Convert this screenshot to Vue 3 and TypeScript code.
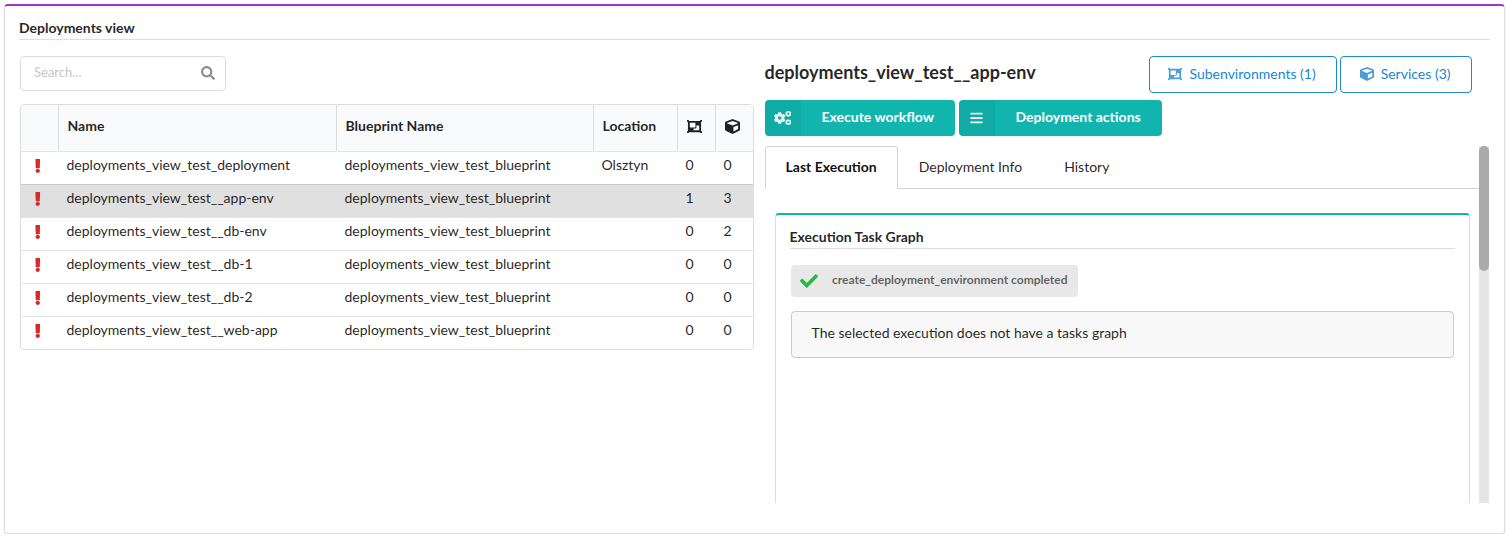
<script setup lang="ts">
interface Glyph {
  box: string
  d: string
}

interface Deployment {
  name: string
  blueprint: string
  location: string
  environments: number
  services: number
}

const icons: Record<string, Glyph> = {
  error: {
    box: '0 0 192 512',
    d: 'M176 432c0 44.112-35.888 80-80 80s-80-35.888-80-80 35.888-80 80-80 80 35.888 80 80zM10 16l12 312C22.5 336 30 342 40 342h112c10 0 17.5-6 18-14l12-312C182.5 7 175 0 166 0H26C17 0 9.500 7 10 16z',
  },
  search: {
    box: '0 0 512 512',
    d: 'M505 442.7L405.3 343c-4.5-4.5-10.6-7-17-7H372c27.6-35.3 44-79.7 44-128C416 93.1 322.9 0 208 0S0 93.1 0 208s93.1 208 208 208c48.3 0 92.7-16.4 128-44v16.3c0 6.4 2.5 12.5 7 17l99.7 99.7c9.4 9.4 24.6 9.4 33.9 0l28.3-28.3c9.4-9.4 9.4-24.6.1-34zM208 336c-70.7 0-128-57.2-128-128 0-70.7 57.2-128 128-128 70.7 0 128 57.2 128 128 0 70.7-57.2 128-128 128z',
  },
  bars: {
    box: '0 0 448 512',
    d: 'M16 132h416c8.8 0 16-7.2 16-16V76c0-8.8-7.2-16-16-16H16C7.2 60 0 67.2 0 76v40c0 8.8 7.2 16 16 16zm0 160h416c8.8 0 16-7.2 16-16v-40c0-8.8-7.2-16-16-16H16c-8.8 0-16 7.2-16 16v40c0 8.8 7.2 16 16 16zm0 160h416c8.8 0 16-7.2 16-16v-40c0-8.8-7.2-16-16-16H16c-8.8 0-16 7.2-16 16v40c0 8.8 7.2 16 16 16z',
  },
  check: {
    box: '0 0 512 512',
    d: 'M173.898 439.404l-166.4-166.4c-9.997-9.997-9.997-26.206 0-36.204l36.203-36.204c9.997-9.998 26.207-9.998 36.204 0L192 312.69 432.095 72.596c9.997-9.997 26.207-9.997 36.204 0l36.203 36.204c9.997 9.997 9.997 26.206 0 36.204l-294.4 294.401c-9.998 9.997-26.207 9.997-36.204-.001z',
  },
  cube: {
    box: '0 0 512 512',
    d: 'M239.1 6.3l-208 78c-18.7 7-31.1 25-31.1 45v225.1c0 18.2 10.3 34.8 26.5 42.9l208 104c13.5 6.8 29.4 6.8 42.9 0l208-104c16.3-8.1 26.5-24.8 26.5-42.9V129.3c0-20-12.4-37.9-31.1-44.9l-208-78C262 2.2 250 2.2 239.1 6.3zM256 68.4l192 72v1.1l-192 78-192-78v-1.1l192-72zm32 356V275.5l160-65v133.9l-160 80z',
  },
  group: {
    box: '0 0 512 512',
    d: 'M480 128V96h20c6.627 0 12-5.373 12-12V44c0-6.627-5.373-12-12-12h-40c-6.627 0-12 5.373-12 12v20H64V44c0-6.627-5.373-12-12-12H12C5.373 32 0 37.373 0 44v40c0 6.627 5.373 12 12 12h20v320H12c-6.627 0-12 5.373-12 12v40c0 6.627 5.373 12 12 12h40c6.627 0 12-5.373 12-12v-20h384v20c0 6.627 5.373 12 12 12h40c6.627 0 12-5.373 12-12v-40c0-6.627-5.373-12-12-12h-20V128zM96 276V140c0-6.627 5.373-12 12-12h168c6.627 0 12 5.373 12 12v136c0 6.627-5.373 12-12 12H108c-6.627 0-12-5.373-12-12zm320 96c0 6.627-5.373 12-12 12H236c-6.627 0-12-5.373-12-12v-52h72c13.255 0 24-10.745 24-24v-72h84c6.627 0 12 5.373 12 12v136z',
  },
}

/* Outline of a gear with a round hole, centred on (cx, cy). */
function gear(cx: number, cy: number, outer: number, inner: number, hole: number, teeth: number): string {
  const step = (Math.PI * 2) / teeth
  const at = (r: number, a: number) => `${(cx + r * Math.cos(a)).toFixed(1)} ${(cy + r * Math.sin(a)).toFixed(1)}`
  const points: string[] = []
  for (let i = 0; i < teeth; i++) {
    const a = i * step + Math.PI / 2
    points.push(at(inner, a - step * 0.34), at(outer, a - step * 0.22), at(outer, a + step * 0.22), at(inner, a + step * 0.34))
  }
  return `M${points.join('L')}zM${cx - hole} ${cy}a${hole} ${hole} 0 1 0 ${hole * 2} 0a${hole} ${hole} 0 1 0 ${-hole * 2} 0z`
}

const gears = [gear(208, 256, 218, 172, 66, 6), gear(524, 98, 118, 96, 42, 6), gear(524, 414, 118, 96, 42, 6)].join('')

const blueprint = 'deployments_view_test_blueprint'
const deployments: Deployment[] = [
  { name: 'deployments_view_test_deployment', blueprint, location: 'Olsztyn', environments: 0, services: 0 },
  { name: 'deployments_view_test__app-env', blueprint, location: '', environments: 1, services: 3 },
  { name: 'deployments_view_test__db-env', blueprint, location: '', environments: 0, services: 2 },
  { name: 'deployments_view_test__db-1', blueprint, location: '', environments: 0, services: 0 },
  { name: 'deployments_view_test__db-2', blueprint, location: '', environments: 0, services: 0 },
  { name: 'deployments_view_test__web-app', blueprint, location: '', environments: 0, services: 0 },
]
const selected = deployments[1]
const tabs = ['Last Execution', 'Deployment Info', 'History']
</script>

<template>
  <main class="widget">
    <h5 class="heading">Deployments view</h5>
    <div class="columns">
      <section class="list">
        <div class="search">
          <input type="text" placeholder="Search..." />
          <svg class="search-icon" :viewBox="icons.search.box"><path :d="icons.search.d" /></svg>
        </div>
        <div class="table">
          <div class="row head">
            <span></span>
            <span>Name</span>
            <span>Blueprint Name</span>
            <span>Location</span>
            <span><svg class="icon" :viewBox="icons.group.box"><path :d="icons.group.d" /></svg></span>
            <span><svg class="icon" :viewBox="icons.cube.box"><path :d="icons.cube.d" /></svg></span>
          </div>
          <div v-for="item in deployments" :key="item.name" class="row" :class="{ selected: item === selected }">
            <span class="status"><svg :viewBox="icons.error.box"><path :d="icons.error.d" /></svg></span>
            <span>{{ item.name }}</span>
            <span>{{ item.blueprint }}</span>
            <span>{{ item.location }}</span>
            <span>{{ item.environments }}</span>
            <span>{{ item.services }}</span>
          </div>
        </div>
      </section>

      <section class="details">
        <header class="details-head">
          <h3>{{ selected.name }}</h3>
          <div class="links">
            <button class="outline">
              <svg :viewBox="icons.group.box"><path :d="icons.group.d" /></svg>
              <span>Subenvironments ({{ selected.environments }})</span>
            </button>
            <button class="outline">
              <svg :viewBox="icons.cube.box"><path :d="icons.cube.d" /></svg>
              <span>Services ({{ selected.services }})</span>
            </button>
          </div>
        </header>
        <div class="actions">
          <button class="teal">
            <span class="badge"><svg class="gears" viewBox="0 0 640 512"><path fill-rule="evenodd" :d="gears" /></svg></span>
            <span class="caption">Execute workflow</span>
          </button>
          <button class="teal">
            <span class="badge"><svg class="bars" :viewBox="icons.bars.box"><path :d="icons.bars.d" /></svg></span>
            <span class="caption">Deployment actions</span>
          </button>
        </div>
        <div class="scroller">
          <div class="content">
            <nav class="tabs">
              <a v-for="(tab, i) in tabs" :key="tab" :class="{ active: i === 0 }">{{ tab }}</a>
            </nav>
            <article class="graph">
              <h5 class="heading">Execution Task Graph</h5>
              <div class="label">
                <svg :viewBox="icons.check.box"><path :d="icons.check.d" /></svg>
                <span>create_deployment_environment completed</span>
              </div>
              <div class="message">The selected execution does not have a tasks graph</div>
            </article>
          </div>
          <div class="track"><div class="thumb"></div></div>
        </div>
      </section>
    </div>
  </main>
</template>

<style>
body {
  background: #fff;
  overflow: hidden;
}
</style>

<style scoped>
* {
  box-sizing: border-box;
}
svg {
  display: block;
  fill: currentColor;
  flex: none;
}
button,
input {
  font-family: inherit;
  margin: 0;
}
.widget {
  width: 1501px;
  height: 530px;
  margin: 4px 0 0 4px;
  padding: 14px 14px 0;
  border: 1px solid #dededf;
  border-top: 2px solid #a333c8;
  border-radius: 4px;
  box-shadow: 0 1px 2px rgba(34, 36, 38, 0.15);
  font: 14px/20px Lato, 'Liberation Sans', sans-serif;
  color: rgba(0, 0, 0, 0.87);
}
.heading {
  margin: 0;
  height: 20px;
  font-size: 14px;
  line-height: 16px;
  font-weight: 700;
  border-bottom: 1px solid #dededf;
}
.columns {
  display: flex;
  align-items: flex-start;
  padding: 16px 0 0 1px;
}
.list {
  width: 734px;
}
.search {
  display: flex;
  align-items: center;
  justify-content: space-between;
  width: 206px;
  height: 35px;
  padding: 0 10px 1px 13px;
  border: 1px solid #dededf;
  border-radius: 4px;
}
.search input {
  width: 120px;
  height: 20px;
  padding: 0 0 2px;
  border: 0;
  outline: 0;
  font-size: 13px;
}
.search input::placeholder {
  color: #c7c7c7;
}
.search-icon {
  width: 14px;
  height: 14px;
  color: #909090;
}
.table {
  margin-top: 13px;
  border: 1px solid #dededf;
  border-radius: 4px;
  overflow: hidden;
}
.row {
  display: grid;
  grid-template-columns: 37px 278px 257px 84px 38px 38px;
  height: 33px;
  border-top: 1px solid #e4e4e5;
}
.row > span {
  padding: 3px 0 0 8.5px;
  white-space: nowrap;
}
.row.head {
  height: 46px;
  border-top: 0;
  background: #f9fafb;
  font-weight: 700;
}
.row.head > span {
  padding: 11px 0 0 8.5px;
  border-left: 1px solid #dcddde;
}
.row.head > span:first-child {
  border-left: 0;
}
.row.selected {
  background: #e0e0e0;
  border-top-color: #c9c9ca;
}
.icon {
  width: 15px;
  height: 15px;
  margin-top: 3px;
}
.row > .status {
  padding: 7px 0 0 14px;
  color: #db2828;
}
.status svg {
  width: 5.5px;
  height: 14px;
}
.details {
  width: 725px;
  margin-left: 11px;
}
.details-head {
  display: flex;
  justify-content: space-between;
  height: 44px;
  padding-right: 18px;
}
.details-head h3 {
  margin: 5px 0 0 -0.5px;
  font-size: 18px;
  line-height: 23px;
}
.links {
  display: flex;
  gap: 3px;
}
.outline {
  display: flex;
  align-items: center;
  height: 37px;
  padding: 0 20.5px 1px 18.5px;
  border: 1px solid #2185d0;
  border-radius: 4px;
  background: #fff;
  color: #2185d0;
  font-size: 14px;
}
.outline svg {
  width: 14px;
  height: 14px;
  margin-right: 7px;
  opacity: 0.8;
}
.outline span {
  padding-bottom: 2px;
}
.actions {
  display: flex;
  gap: 4px;
}
.teal {
  display: flex;
  height: 36px;
  padding: 0;
  border: 0;
  border-radius: 4px;
  overflow: hidden;
  background: #12b5ae;
  color: #fff;
  font-size: 14px;
  font-weight: 700;
  line-height: 34px;
}
.badge {
  display: flex;
  align-items: center;
  justify-content: center;
  width: 36px;
  height: 36px;
  padding-right: 1px;
  background: rgba(0, 0, 0, 0.05);
}
.badge svg {
  opacity: 0.9;
}
.gears {
  width: 17.5px;
  height: 14px;
}
.bars {
  width: 13px;
  height: 14px;
}
.caption {
  padding: 0 21px 0 20.5px;
}
.scroller {
  display: flex;
  width: 724px;
  height: 357px;
  margin-top: 10px;
  overflow: hidden;
}
.content {
  width: 714px;
}
.tabs {
  display: flex;
  height: 43px;
  border-bottom: 1px solid #d4d4d5;
}
.tabs a {
  height: 42px;
  padding: 11px 21px 0;
}
.tabs a.active {
  height: 43px;
  padding: 10px 20.5px 0 19.5px;
  margin-right: -0.5px;
  border: 1px solid #d4d4d5;
  border-bottom: 0;
  border-radius: 4px 4px 0 0;
  background: #fff;
  color: rgba(0, 0, 0, 0.95);
  font-weight: 700;
}
.graph {
  width: 695px;
  height: 400px;
  margin: 24px 0 0 10px;
  padding: 14px 14px 14px 13.5px;
  border: 1px solid #dededf;
  border-top: 2px solid #12b5ae;
  border-radius: 4px;
}
.label {
  display: flex;
  align-items: center;
  width: 287px;
  height: 32px;
  margin: 16px 0 0 1.5px;
  padding: 0 10px 0 9px;
  border-radius: 4px;
  background: #e8e8e8;
  color: rgba(0, 0, 0, 0.6);
  font-size: 12px;
  font-weight: 700;
}
.label svg {
  width: 18px;
  height: 18px;
  margin-right: 14px;
  color: #21ba45;
}
.label span {
  padding-bottom: 2px;
}
.message {
  width: 663px;
  height: 47px;
  margin: 14px 0 0 1.5px;
  padding: 11px 19.5px;
  border: 1px solid #c9caca;
  border-radius: 4px;
  background: #f8f8f9;
}
.track {
  width: 10px;
  margin-left: auto;
  background: #e5e5e5;
}
.thumb {
  height: 125px;
  border-radius: 5px;
  background: #ababab;
}
</style>
